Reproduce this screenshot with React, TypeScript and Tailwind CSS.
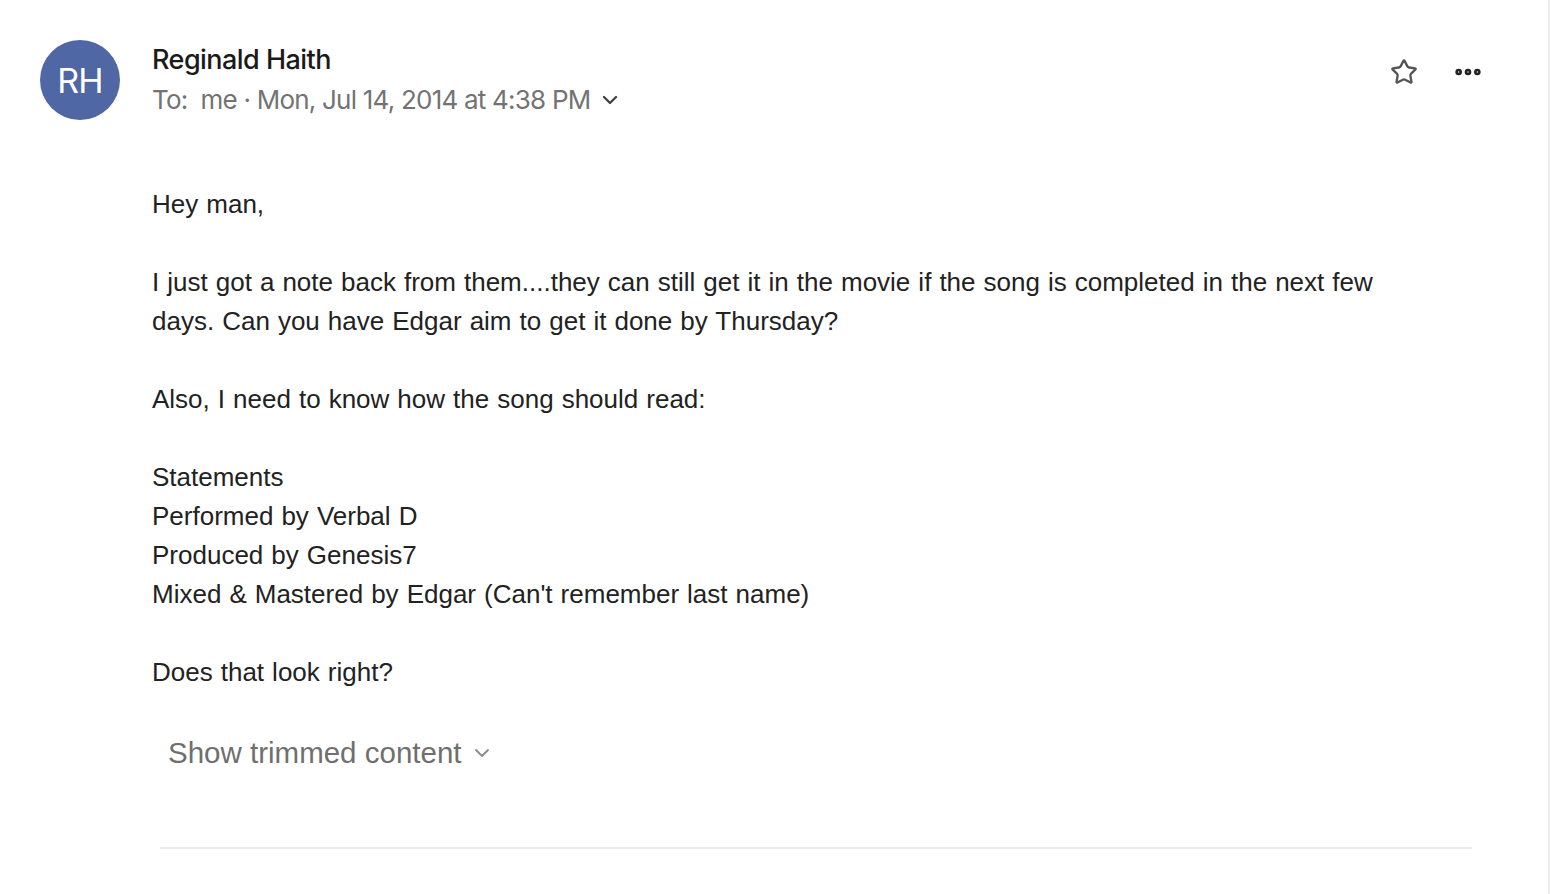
import { ChevronDown, Star, MoreHorizontal } from "lucide-react"

const BODY = [
  ["Hey man,"],
  [
    "I just got a note back from them....they can still get it in the movie if the song is completed in the next few days. Can you have Edgar aim to get it done by Thursday?",
  ],
  ["Also, I need to know how the song should read:"],
  [
    "Statements",
    "Performed by Verbal D",
    "Produced by Genesis7",
    "Mixed & Mastered by Edgar (Can't remember last name)",
  ],
  ["Does that look right?"],
]

export default function App() {
  return (
    <div className="min-h-screen w-full bg-white flex">
      <div className="flex-1 border-r-2 border-[#ececec] h-[894px] overflow-hidden">
        <div className="flex items-start pl-10 pr-16 pt-10">
          <div className="w-20 h-20 rounded-full bg-[#4f67a5] flex items-center justify-center text-white text-[34px] font-['Inter',sans-serif] tracking-tight shrink-0">
            RH
          </div>
          <div className="ml-8 flex-1 font-['Inter',sans-serif]">
            <div className="text-[27px] leading-[40px] font-medium text-[#1a1a1a] tracking-[-0.02em]">
              Reginald Haith
            </div>
            <div className="flex items-center text-[26px] leading-[40px] text-[#737373] tracking-[-0.03em]">
              <span>To:&nbsp; me · Mon, Jul 14, 2014 at 4:38 PM</span>
              <ChevronDown className="w-6 h-6 ml-2 text-[#444]" strokeWidth={2.4} />
            </div>
          </div>
          <div className="flex items-center gap-[34px] mt-4">
            <Star className="w-7 h-7 text-[#555]" strokeWidth={2} />
            <MoreHorizontal className="w-8 h-8 text-[#222]" strokeWidth={3} />
          </div>
        </div>

        <div className="pl-[152px] w-[1400px] mt-[65px] font-['Liberation_Sans',Arial,sans-serif] text-[26px] leading-[39px] text-[#222] [word-spacing:0.8px]">
          {BODY.map((para, i) => (
            <div key={i} className="mb-[39px]">
              {para.map((line) => (
                <div key={line}>{line}</div>
              ))}
            </div>
          ))}
        </div>

        <div className="pl-[168px] flex items-center font-['Liberation_Sans',Arial,sans-serif] text-[29.5px] text-[#6f6f6f]">
          <span>Show trimmed content</span>
          <ChevronDown className="w-6 h-6 ml-2 text-[#8a8a8a]" strokeWidth={1.8} />
        </div>

        <div className="ml-[160px] mr-[76px] mt-[72px] border-t-2 border-[#ececec]" />
      </div>
    </div>
  )
}
